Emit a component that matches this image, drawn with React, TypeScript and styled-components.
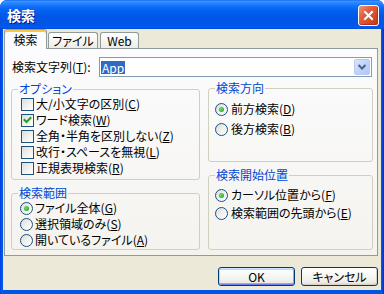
import React from "react";
import styled, { createGlobalStyle, css } from "styled-components";

const GlobalStyle = createGlobalStyle`
  html, body { margin: 0; padding: 0; background: #ffffff; }
  body {
    font-family: "Noto Sans CJK JP", "Noto Sans", sans-serif;
    font-size: 12px;
    font-feature-settings: "palt";
    color: #000;
  }
  * { box-sizing: border-box; }
`;

const Window = styled.div`
  width: 384px;
  height: 294px;
  display: flex;
  flex-direction: column;
  background: linear-gradient(to right, #0831d9 0px, #0055e5 1px, #0058ee 2px, #0055e5 3px, #0055e5 381px, #0058ee 382px, #0831d9 383px);
  border-radius: 7px 7px 0 0;
  overflow: hidden;
`;

const TitleBar = styled.div`
  height: 29px;
  flex: none;
  display: flex;
  align-items: center;
  justify-content: space-between;
  padding: 1px 5px 0 7px;
  background: linear-gradient(
    to bottom,
    #0a5ff4 0px,
    #3d95ff 1px,
    #2a86ff 3px,
    #1172fb 6px,
    #0463f1 10px,
    #0058e8 16px,
    #0055e5 22px,
    #0057ea 25px,
    #005bf0 27px,
    #0049d8 29px
  );
`;

const Title = styled.div`
  color: #ffffff;
  font-weight: 700;
  font-size: 14px;
  line-height: 15px;
  letter-spacing: 0;
  text-shadow: 1px 1px 0 #0a1883;
`;

const CloseButton = styled.div`
  width: 21px;
  height: 21px;
  border: 1px solid #ffffff;
  border-radius: 3px;
  display: flex;
  align-items: center;
  justify-content: center;
  background: linear-gradient(135deg, #f1957a 0%, #e2603f 35%, #d44a28 70%, #c13617 100%);
  box-shadow: inset -1px -1px 0 #b2331a;
`;

const Body = styled.div`
  flex: 1;
  display: flex;
  flex-direction: column;
  margin: 0 3px 4px;
  padding: 0 3px 0 1px;
  background: #ece9d8;
`;

const TabStrip = styled.div`
  height: 19px;
  flex: none;
  display: flex;
  align-items: flex-end;
  position: relative;
  z-index: 1;
`;

const Tab = styled.div<{ $active?: boolean; $width: number; $gap?: number }>`
  width: ${(p) => p.$width}px;
  margin-left: ${(p) => p.$gap ?? 0}px;
  display: flex;
  align-items: center;
  justify-content: center;
  border: 1px solid #919b9c;
  border-bottom: none;
  border-radius: 3px 3px 0 0;
  line-height: 12px;
  ${(p) =>
    p.$active
      ? css`
          height: 20px;
          margin-bottom: -1px;
          padding: 1px 0 0;
          border-top: 1px solid #e68b2c;
          box-shadow: inset 0 2px 0 #ffc73c;
          background: #fcfcfe;
        `
      : css`
          height: 16px;
          padding: 1px 0 0;
          background: linear-gradient(#ffffff, #f3f3ef 70%, #ecebe6);
        `}
`;

const TabPanel = styled.div`
  height: 208px;
  flex: none;
  border: 1px solid #919b9c;
  background: linear-gradient(#fcfcfe, #f4f3ee);
  padding: 8px 5px 0 6px;
  display: flex;
  flex-direction: column;
`;

const SearchRow = styled.div`
  height: 20px;
  display: flex;
  align-items: center;
  padding-left: 1px;
`;

const FieldLabel = styled.div`
  width: 87px;
  flex: none;
  line-height: 12px;
`;

const Combo = styled.div`
  flex: 1;
  height: 20px;
  border: 1px solid #7f9db9;
  background: #ffffff;
  display: flex;
  align-items: center;
  justify-content: space-between;
  padding: 0 1px 0 1px;
`;

const Selection = styled.span`
  background: #316ac5;
  color: #ffffff;
  line-height: 13px;
  height: 13px;
  padding: 0 1px;
`;

const DropButton = styled.div`
  width: 16px;
  height: 16px;
  border: 1px solid #bac9f1;
  border-radius: 2px;
  background: linear-gradient(135deg, #dbe6fd 0%, #c1d3fb 50%, #b3c7f5 100%);
  display: flex;
  align-items: center;
  justify-content: center;
`;

const Columns = styled.div`
  margin-top: 6px;
  display: grid;
  grid-template-columns: 189px 165px;
  column-gap: 8px;
`;

const Column = styled.div<{ $shift?: number }>`
  display: flex;
  flex-direction: column;
  gap: 7px;
  margin-top: ${(p) => p.$shift ?? 0}px;
`;

const Group = styled.fieldset<{ $height: number }>`
  height: ${(p) => p.$height}px;
  margin: 0;
  padding: 0;
  min-width: 0;
  border: 1px solid #d0d0bf;
  border-radius: 3px;
`;

const GroupLabel = styled.legend`
  margin-left: 6px;
  padding: 0 1px;
  color: #0046d5;
  font-size: 12px;
  line-height: 12px;
`;

const GroupBody = styled.div<{ $pt: number; $pl: number }>`
  padding: ${(p) => p.$pt}px 0 0 ${(p) => p.$pl}px;
  display: flex;
  flex-direction: column;
`;

const OptionRow = styled.div<{ $h: number; $gap?: number }>`
  height: ${(p) => p.$h}px;
  display: flex;
  align-items: center;
  gap: ${(p) => p.$gap ?? 2}px;
  line-height: 12px;
  white-space: nowrap;
`;

const CheckBox = styled.span`
  width: 13px;
  height: 13px;
  flex: none;
  border: 1px solid #1c5180;
  background: linear-gradient(135deg, #dcdcd7 0%, #f0f0ec 50%, #ffffff 100%);
  display: flex;
  align-items: center;
  justify-content: center;
`;

const Radio = styled.span<{ $checked?: boolean }>`
  width: 13px;
  height: 13px;
  flex: none;
  border: 1px solid #1c5180;
  border-radius: 50%;
  background: linear-gradient(135deg, #dcdcd7 0%, #f0f0ec 50%, #ffffff 100%);
  display: flex;
  align-items: center;
  justify-content: center;
  &::after {
    content: "";
    display: ${(p) => (p.$checked ? "block" : "none")};
    width: 5px;
    height: 5px;
    border-radius: 50%;
    background: radial-gradient(circle at 40% 40%, #7ee07a 0%, #3fb83c 50%, #21a121 100%);
  }
`;

const Acc = styled.span`
  text-decoration: underline;
  text-underline-offset: 1px;
`;

const ButtonRow = styled.div`
  margin-top: 11px;
  display: flex;
  justify-content: flex-end;
  gap: 6px;
`;

const Button = styled.div<{ $default?: boolean }>`
  width: 77px;
  height: 19px;
  border: 1px solid #003c74;
  border-radius: 3px;
  display: flex;
  align-items: center;
  justify-content: center;
  line-height: 12px;
  background: linear-gradient(#ffffff 0%, #f6f6f3 50%, #ecebe6 85%, #d6d0c5 100%);
  box-shadow: ${(p) =>
    p.$default
      ? "inset 0 1px 0 #cee7ff, inset 1px 0 0 #bcd4f6, inset -1px 0 0 #89ade4, inset 0 -1px 0 #6982ee, inset 0 2px 0 #bcd4f6, inset 0 -2px 0 #89ade4"
      : "inset -1px -1px 0 #d6d0c5"};
`;

const CheckMark = () => (
  <svg width="9" height="9" viewBox="0 0 9 9">
    <path d="M1.5 4 L3.5 6 L7.5 2" stroke="#21a121" strokeWidth="2" fill="none" strokeLinecap="square" />
  </svg>
);

const CloseX = () => (
  <svg width="11" height="11" viewBox="0 0 11 11">
    <path d="M2 2 L9 9 M9 2 L2 9" stroke="#ffffff" strokeWidth="2" strokeLinecap="square" />
  </svg>
);

const Chevron = () => (
  <svg width="10" height="8" viewBox="0 0 10 8">
    <path d="M1.5 2 L5 5.5 L8.5 2" stroke="#4d6185" strokeWidth="2" fill="none" />
  </svg>
);

type Opt = { text: string; acc: string; checked?: boolean };

const options: Opt[] = [
  { text: "大/小文字の区別", acc: "C" },
  { text: "ワード検索", acc: "W", checked: true },
  { text: "全角・半角を区別しない", acc: "Z" },
  { text: "改行・スペースを無視", acc: "L" },
  { text: "正規表現検索", acc: "R" },
];

const scopes: Opt[] = [
  { text: "ファイル全体", acc: "G", checked: true },
  { text: "選択領域のみ", acc: "S" },
  { text: "開いているファイル", acc: "A" },
];

const directions: Opt[] = [
  { text: "前方検索", acc: "D", checked: true },
  { text: "後方検索", acc: "B" },
];

const starts: Opt[] = [
  { text: "カーソル位置から", acc: "F", checked: true },
  { text: "検索範囲の先頭から", acc: "E" },
];

const Label = ({ o }: { o: Opt }) => (
  <span>
    {o.text}(<Acc>{o.acc}</Acc>)
  </span>
);

export default function App() {
  return (
    <>
      <GlobalStyle />
      <Window>
        <TitleBar>
          <Title>検索</Title>
          <CloseButton>
            <CloseX />
          </CloseButton>
        </TitleBar>
        <Body>
          <TabStrip>
            <Tab $active $width={43}>検索</Tab>
            <Tab $width={50} $gap={1}>ファイル</Tab>
            <Tab $width={39} $gap={2}>Web</Tab>
          </TabStrip>
          <TabPanel>
            <SearchRow>
              <FieldLabel>
                検索文字列(<Acc>T</Acc>):
              </FieldLabel>
              <Combo>
                <Selection>App</Selection>
                <DropButton>
                  <Chevron />
                </DropButton>
              </Combo>
            </SearchRow>
            <Columns>
              <Column>
                <Group $height={97}>
                  <GroupLabel>オプション</GroupLabel>
                  <GroupBody $pt={1} $pl={9}>
                    {options.map((o) => (
                      <OptionRow key={o.acc} $h={16}>
                        <CheckBox>{o.checked && <CheckMark />}</CheckBox>
                        <Label o={o} />
                      </OptionRow>
                    ))}
                  </GroupBody>
                </Group>
                <Group $height={63}>
                  <GroupLabel>検索範囲</GroupLabel>
                  <GroupBody $pt={1} $pl={8}>
                    {scopes.map((o) => (
                      <OptionRow key={o.acc} $h={16}>
                        <Radio $checked={o.checked} />
                        <Label o={o} />
                      </OptionRow>
                    ))}
                  </GroupBody>
                </Group>
              </Column>
              <Column $shift={-1}>
                <Group $height={80}>
                  <GroupLabel>検索方向</GroupLabel>
                  <GroupBody $pt={5} $pl={6}>
                    {directions.map((o) => (
                      <OptionRow key={o.acc} $h={20} $gap={3}>
                        <Radio $checked={o.checked} />
                        <Label o={o} />
                      </OptionRow>
                    ))}
                  </GroupBody>
                </Group>
                <Group $height={81}>
                  <GroupLabel>検索開始位置</GroupLabel>
                  <GroupBody $pt={5} $pl={6}>
                    {starts.map((o) => (
                      <OptionRow key={o.acc} $h={18} $gap={3}>
                        <Radio $checked={o.checked} />
                        <Label o={o} />
                      </OptionRow>
                    ))}
                  </GroupBody>
                </Group>
              </Column>
            </Columns>
          </TabPanel>
          <ButtonRow>
            <Button $default>OK</Button>
            <Button>キャンセル</Button>
          </ButtonRow>
        </Body>
      </Window>
    </>
  );
}
